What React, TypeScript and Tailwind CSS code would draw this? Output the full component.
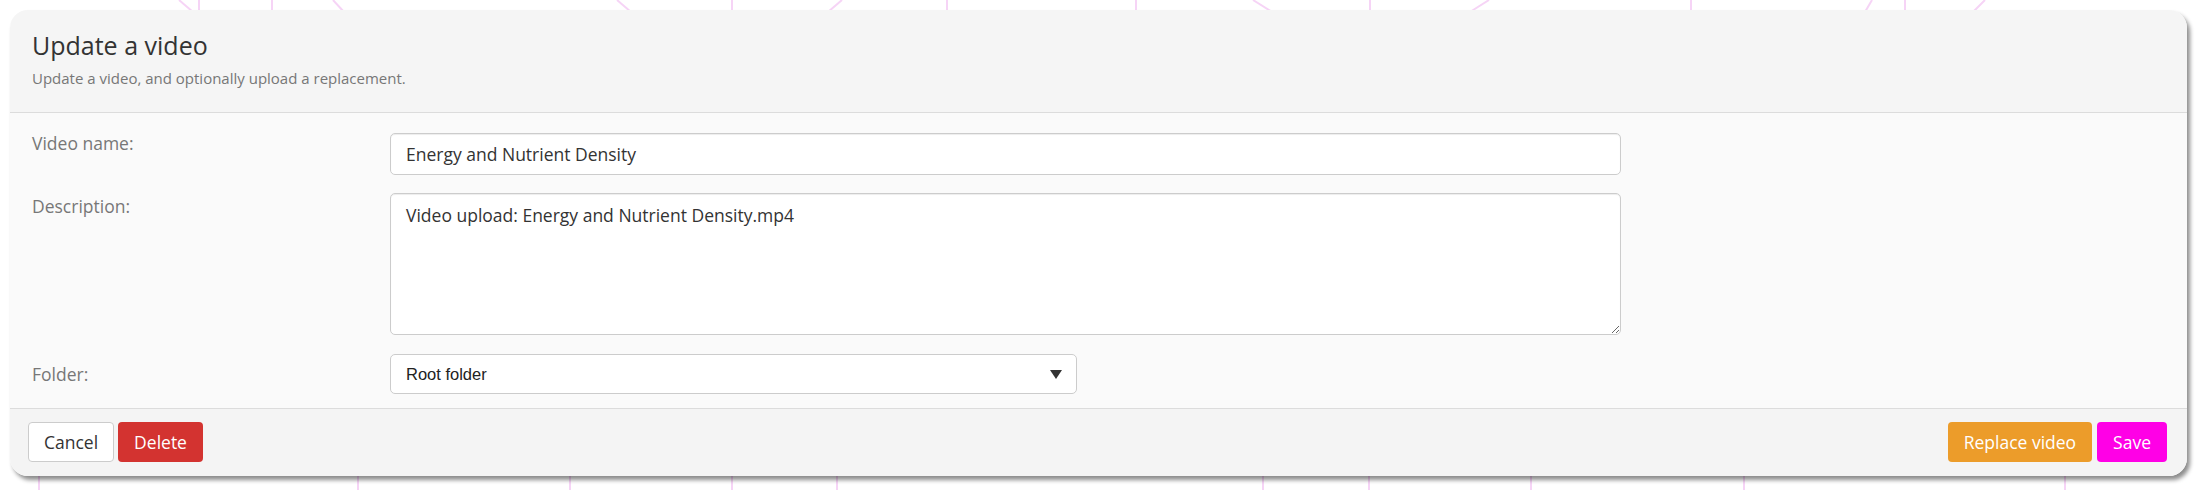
import { useState } from 'react';

const topLines = [
  { x1: 199, x2: 199 },
  { x1: 179, x2: 193, diag: true },
  { x1: 333, x2: 344, diag: true },
  { x1: 272, x2: 272 },
  { x1: 617, x2: 631, diag: true },
  { x1: 732, x2: 732 },
  { x1: 842, x2: 828, diag: true },
  { x1: 947, x2: 947 },
  { x1: 1136, x2: 1136 },
  { x1: 1253, x2: 1272, diag: true },
  { x1: 1370, x2: 1370 },
  { x1: 1489, x2: 1470, diag: true },
  { x1: 1691, x2: 1691 },
  { x1: 1872, x2: 1865, diag: true },
  { x1: 1985, x2: 1973, diag: true },
  { x1: 1905, x2: 1905 },
];

const bottomLines = [39, 358, 570, 732, 837, 1263, 1369, 1531, 1744, 2065];

function BackgroundPattern() {
  return (
    <svg className="absolute inset-0 w-full h-full" width="2197" height="490">
      {topLines.map((l, i) => (
        <line key={`t${i}`} x1={l.x1} y1={0} x2={l.x2} y2={12} stroke="#f6d4f6" strokeWidth="2" />
      ))}
      {bottomLines.map((x, i) => (
        <line key={`b${i}`} x1={x} y1={470} x2={x} y2={490} stroke="#f6d4f6" strokeWidth="2" />
      ))}
    </svg>
  );
}

export default function App() {
  const [name, setName] = useState('Energy and Nutrient Density');
  const [description, setDescription] = useState('Video upload: Energy and Nutrient Density.mp4');

  return (
    <div className="relative w-[2197px] h-[490px] bg-white overflow-hidden font-['Open_Sans',sans-serif]">
      <BackgroundPattern />

      <div className="relative ml-[10px] mt-[10px] w-[2177px] rounded-[18px] overflow-hidden shadow-[3px_4px_4px_rgba(0,0,0,0.45)]">
        {/* Header */}
        <div className="bg-[#f5f5f5] border-b border-[#dcdcdc] pl-[22px] pt-[19px] pb-[24px]">
          <h1 className="text-[25px] leading-[32px] text-[#333]">Update a video</h1>
          <p className="mt-[7px] text-[15px] leading-[20px] text-[#777]">
            Update a video, and optionally upload a replacement.
          </p>
        </div>

        {/* Body */}
        <div className="bg-[#fafafa] pl-[22px] pt-[20px] pb-[14px] flex flex-col gap-[18px]">
          <div className="flex items-start">
            <label className="w-[358px] text-[17.5px] leading-[24px] text-[#777] -mt-[2px]">Video name:</label>
            <input
              value={name}
              onChange={(e) => setName(e.target.value)}
              className="w-[1231px] h-[42px] bg-white border border-[#ccc] rounded-[5px] px-[15px] text-[17.5px] text-[#333] outline-none shadow-[inset_0_1px_1px_rgba(0,0,0,0.075)]"
            />
          </div>

          <div className="flex items-start">
            <label className="w-[358px] text-[17.5px] leading-[24px] text-[#777] pt-[1px]">Description:</label>
            <textarea
              value={description}
              onChange={(e) => setDescription(e.target.value)}
              className="w-[1231px] h-[142px] bg-white border border-[#ccc] rounded-[5px] px-[15px] pt-[9px] text-[17.5px] leading-[24px] text-[#333] outline-none resize shadow-[inset_0_1px_1px_rgba(0,0,0,0.075)]"
            />
          </div>

          <div className="flex items-center mt-[1px]">
            <label className="w-[358px] text-[17.5px] leading-[24px] text-[#777]">Folder:</label>
            <div className="w-[687px] h-[40px] bg-white border border-[#ccc] rounded-[5px] pl-[15px] pr-[14px] flex items-center justify-between">
              <span className="font-['Liberation_Sans',sans-serif] text-[16.5px] text-[#222]">Root folder</span>
              <svg width="12" height="9" viewBox="0 0 12 9">
                <path d="M0 0 H12 L6 9 Z" fill="#333" />
              </svg>
            </div>
          </div>
        </div>

        {/* Footer */}
        <div className="bg-[#f4f4f4] border-t border-[#dcdcdc] pl-[18px] pr-[20px] pt-[13px] pb-[14px] flex items-center justify-between">
          <div className="flex gap-[4px]">
            <button className="h-[40px] px-[15px] bg-white border border-[#ccc] rounded-[4px] text-[17.5px] text-[#333]">
              Cancel
            </button>
            <button className="h-[40px] px-[16px] bg-[#d33330] rounded-[4px] text-[17.5px] text-white">
              Delete
            </button>
          </div>
          <div className="flex gap-[5px]">
            <button className="h-[40px] px-[16px] bg-[#ec9c2a] rounded-[4px] text-[17.5px] text-white">
              Replace video
            </button>
            <button className="h-[40px] px-[16px] bg-[#ff00e6] rounded-[4px] text-[17.5px] text-white">
              Save
            </button>
          </div>
        </div>
      </div>
    </div>
  );
}
